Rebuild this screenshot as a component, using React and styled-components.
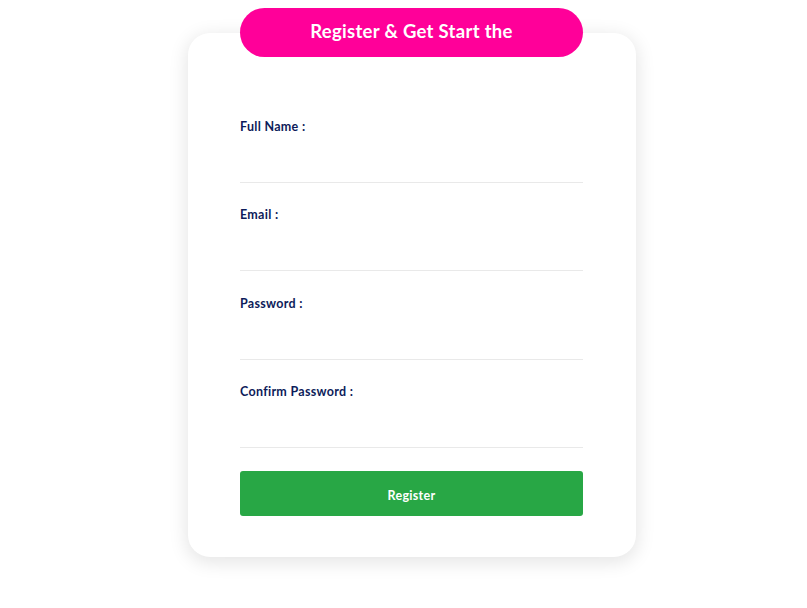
import styled, { createGlobalStyle } from "styled-components";

const GlobalStyle = createGlobalStyle`
  body {
    margin: 0;
    background: #fff;
    font-family: "Lato", "Open Sans", sans-serif;
  }
`;

const fields = [
  { label: "Full Name :", type: "text" },
  { label: "Email :", type: "email" },
  { label: "Password :", type: "password" },
  { label: "Confirm Password :", type: "password" },
];

export default function App() {
  return (
    <>
      <GlobalStyle />
      <StyledPage>
        <StyledCard>
          <StyledTitle>Register &amp; Get Start the</StyledTitle>
          <StyledForm onSubmit={(e) => e.preventDefault()}>
            {fields.map((field, index) => (
              <StyledGroup key={index}>
                <StyledLabel>{field.label}</StyledLabel>
                <StyledInput type={field.type} />
              </StyledGroup>
            ))}
            <StyledButton type="submit">Register</StyledButton>
          </StyledForm>
        </StyledCard>
      </StyledPage>
    </>
  );
}

const StyledPage = styled.div`
  display: flex;
  justify-content: center;
  padding: 33px 0 40px 17px;
`;
const StyledCard = styled.div`
  position: relative;
  width: 448px;
  box-sizing: border-box;
  padding: 84px 53px 41px 52px;
  background: #fff;
  border-radius: 22px;
  box-shadow: 0 4px 18px 2px rgba(0, 0, 0, 0.1);
`;
const StyledTitle = styled.h2`
  position: absolute;
  top: -25px;
  left: 52px;
  right: 53px;
  height: 49px;
  box-sizing: border-box;
  padding-bottom: 3px;
  margin: 0;
  display: flex;
  align-items: center;
  justify-content: center;
  background: #ff0099;
  border-radius: 25px;
  color: #fff;
  font-size: 18.5px;
  font-weight: 700;
  letter-spacing: 0.3px;
`;
const StyledForm = styled.form`
  display: flex;
  flex-direction: column;
  gap: 22.4px;
`;
const StyledGroup = styled.div`
  display: flex;
  flex-direction: column;
  border-bottom: 1px solid #e9e9e9;
`;
const StyledLabel = styled.label`
  font-size: 12.5px;
  line-height: 20px;
  font-weight: 700;
  letter-spacing: 0.3px;
  color: #0d1c5a;
`;
const StyledInput = styled.input`
  height: 45px;
  border: none;
  outline: none;
  padding: 0;
  background: transparent;
  font-size: 13px;
`;
const StyledButton = styled.button`
  height: 45px;
  padding-top: 5px;
  border: none;
  border-radius: 3px;
  background: #28a745;
  color: #fff;
  font-family: "Lato", "Open Sans", sans-serif;
  font-size: 12.5px;
  font-weight: 700;
  letter-spacing: 0.3px;
  cursor: pointer;
`;
